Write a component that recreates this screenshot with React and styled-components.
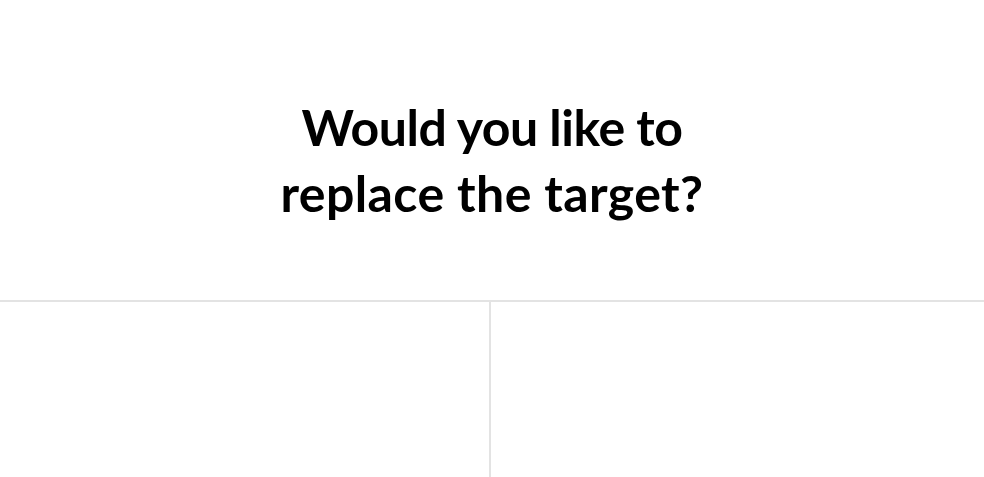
import React from "react";
import styled, { createGlobalStyle } from "styled-components";

const GlobalStyle = createGlobalStyle`
    html, body {
        margin: 0;
        padding: 0;
        background: #ffffff;
    }
    body {
        font-family: "Lato", "Noto Sans", sans-serif;
        color: #000000;
    }
`;

const Dialog = styled.div`
    display: flex;
    flex-direction: column;
    width: 984px;
    height: 477px;
    overflow: hidden;
    background: #ffffff;
`;

const Header = styled.div`
    display: flex;
    align-items: flex-start;
    justify-content: center;
    height: 302px;
    padding-top: 94px;
    box-sizing: border-box;
`;

const Title = styled.h1`
    display: flex;
    flex-direction: column;
    align-items: center;
    margin: 0;
    font-size: 50px;
    font-weight: 700;
    line-height: 66px;
    text-align: center;
`;

const TitleLine = styled.span`
    letter-spacing: ${(p) => p.spacing}px;
    white-space: nowrap;
`;

const Actions = styled.div`
    display: grid;
    grid-template-columns: 489px 1fr;
    height: 176px;
    border-top: 2px solid #e3e3e3;
`;

const ActionButton = styled.button`
    border: none;
    background: transparent;
    border-left: ${(p) => (p.divider ? "2px solid #e3e3e3" : "none")};
    font-family: inherit;
    font-size: 20px;
    color: #ffffff;
    cursor: pointer;
`;

const App = () => {
    return (
        <>
            <GlobalStyle />
            <Dialog>
                <Header>
                    <Title>
                        <TitleLine spacing={-0.5}>Would you like to</TitleLine>
                        <TitleLine spacing={0.4}>replace the target?</TitleLine>
                    </Title>
                </Header>
                <Actions>
                    <ActionButton aria-label="No" />
                    <ActionButton divider aria-label="Yes" />
                </Actions>
            </Dialog>
        </>
    );
};

export default App;
